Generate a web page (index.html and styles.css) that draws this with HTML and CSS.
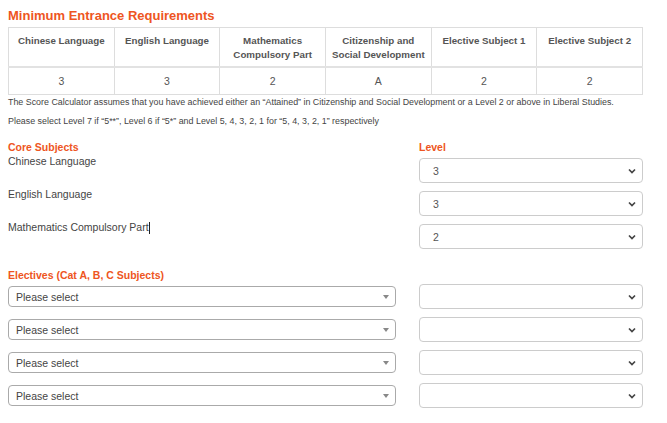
FILE: index.html
```html
<!DOCTYPE html>
<html lang="en">
<head>
<meta charset="utf-8">
<title>Minimum Entrance Requirements</title>
<link rel="stylesheet" href="styles.css">
</head>
<body>
<div class="page">
  <h2 class="title">Minimum Entrance Requirements</h2>
  <table class="req">
    <thead>
      <tr>
        <th>Chinese Language</th>
        <th>English Language</th>
        <th>Mathematics<br>Compulsory Part</th>
        <th>Citizenship and<br>Social Development</th>
        <th>Elective Subject 1</th>
        <th>Elective Subject 2</th>
      </tr>
    </thead>
    <tbody>
      <tr>
        <td>3</td><td>3</td><td>2</td><td>A</td><td>2</td><td>2</td>
      </tr>
    </tbody>
  </table>
  <p class="note">The Score Calculator assumes that you have achieved either an “Attained” in Citizenship and Social Development or a Level 2 or above in Liberal Studies.</p>
  <p class="note">Please select Level 7 if “5**”, Level 6 if “5*” and Level 5, 4, 3, 2, 1 for “5, 4, 3, 2, 1” respectively</p>

  <div class="grid core-head">
    <div class="heading">Core Subjects</div>
    <div class="heading">Level</div>
  </div>
  <div class="grid core-row">
    <div class="label">Chinese Language</div>
    <div class="level"><span class="val">3</span><svg class="chev" width="8" height="6" viewBox="0 0 8 6"><polyline points="1,1.5 4,4.5 7,1.5" fill="none" stroke="#444" stroke-width="1.7"/></svg></div>
  </div>
  <div class="grid core-row">
    <div class="label">English Language</div>
    <div class="level"><span class="val">3</span><svg class="chev" width="8" height="6" viewBox="0 0 8 6"><polyline points="1,1.5 4,4.5 7,1.5" fill="none" stroke="#444" stroke-width="1.7"/></svg></div>
  </div>
  <div class="grid core-row">
    <div class="label">Mathematics Compulsory Part<span class="caret"></span></div>
    <div class="level"><span class="val">2</span><svg class="chev" width="8" height="6" viewBox="0 0 8 6"><polyline points="1,1.5 4,4.5 7,1.5" fill="none" stroke="#444" stroke-width="1.7"/></svg></div>
  </div>

  <div class="heading elec-head">Electives (Cat A, B, C Subjects)</div>
  <div class="grid elec-row">
    <div class="pick"><span class="ph">Please select</span><span class="tri"></span></div>
    <div class="level"><span class="val"></span><svg class="chev" width="8" height="6" viewBox="0 0 8 6"><polyline points="1,1.5 4,4.5 7,1.5" fill="none" stroke="#444" stroke-width="1.7"/></svg></div>
  </div>
  <div class="grid elec-row">
    <div class="pick"><span class="ph">Please select</span><span class="tri"></span></div>
    <div class="level"><span class="val"></span><svg class="chev" width="8" height="6" viewBox="0 0 8 6"><polyline points="1,1.5 4,4.5 7,1.5" fill="none" stroke="#444" stroke-width="1.7"/></svg></div>
  </div>
  <div class="grid elec-row">
    <div class="pick"><span class="ph">Please select</span><span class="tri"></span></div>
    <div class="level"><span class="val"></span><svg class="chev" width="8" height="6" viewBox="0 0 8 6"><polyline points="1,1.5 4,4.5 7,1.5" fill="none" stroke="#444" stroke-width="1.7"/></svg></div>
  </div>
  <div class="grid elec-row">
    <div class="pick"><span class="ph">Please select</span><span class="tri"></span></div>
    <div class="level"><span class="val"></span><svg class="chev" width="8" height="6" viewBox="0 0 8 6"><polyline points="1,1.5 4,4.5 7,1.5" fill="none" stroke="#444" stroke-width="1.7"/></svg></div>
  </div>
</div>
</body>
</html>
```

FILE: styles.css
```css
html, body {
  margin: 0;
  padding: 0;
  background: #fff;
}
body {
  font-family: "Liberation Sans", Arial, sans-serif;
  color: #444;
}
.page {
  width: 635px;
  padding: 8px 0 0 8px;
}
.title {
  margin: 0 0 4px 0;
  font-size: 13px;
  line-height: 15px;
  font-weight: bold;
  color: #ee5522;
}
.req {
  width: 635px;
  border-collapse: collapse;
  table-layout: fixed;
  border: 1px solid #ddd;
}
.req th, .req td {
  border: 1px solid #ddd;
  text-align: center;
  color: #555;
}
.req th {
  font-size: 9.75px;
  font-weight: bold;
  vertical-align: top;
  padding: 6px 4px 5px;
  line-height: 13.5px;
  border-bottom: 2px solid #e2e2e2;
}
.req td {
  font-size: 10.5px;
  padding: 6px 4px;
  line-height: 14px;
}
.note {
  margin: 0 0 6px 0;
  font-size: 8.9px;
  line-height: 13px;
  color: #444;
}
.note:first-of-type {
  margin-top: 1px;
}
.grid {
  display: grid;
  grid-template-columns: 388px 224px;
  column-gap: 23px;
}
.heading {
  font-size: 10.5px;
  line-height: 13px;
  font-weight: bold;
  color: #ee5522;
}
.core-head {
  margin-top: 13px;
}
.core-row {
  height: 33px;
  align-items: start;
}
.label {
  font-size: 10.5px;
  line-height: 13px;
  padding-top: 1px;
  color: #444;
  display: flex;
  align-items: center;
}
.caret {
  display: inline-block;
  width: 1px;
  height: 12px;
  background: #222;
}
.level {
  box-sizing: border-box;
  height: 25px;
  border: 1px solid #ccc;
  border-radius: 4px;
  display: flex;
  align-items: center;
  justify-content: space-between;
  padding: 0 6px 0 13px;
  font-size: 10.5px;
  color: #555;
  background: #fff;
}
.core-row .level {
  margin-top: 4px;
}
.chev {
  display: block;
}
.elec-head {
  margin-top: 16px;
}
.elec-row {
  height: 33px;
  align-items: center;
  padding-bottom: 4px;
  box-sizing: border-box;
}
.pick {
  box-sizing: border-box;
  height: 21px;
  border: 1px solid #aaa;
  border-radius: 4px;
  display: flex;
  align-items: center;
  justify-content: space-between;
  padding: 0 6px 0 7px;
  font-size: 10.5px;
  color: #444;
  background: #fff;
}
.tri {
  width: 0;
  height: 0;
  border-left: 3px solid transparent;
  border-right: 3px solid transparent;
  border-top: 4px solid #888;
}
```
